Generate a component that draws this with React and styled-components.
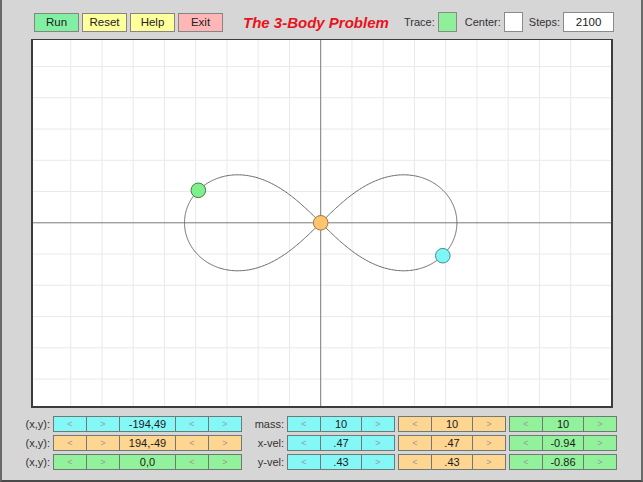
import React, { useMemo } from "react"
import styled, { createGlobalStyle } from "styled-components"

const GlobalStyle = createGlobalStyle`
  html, body {
    margin: 0;
    padding: 0;
    background: #d6d6d6;
  }
  body {
    font-family: "Liberation Sans", Arial, sans-serif;
  }
`

const Frame = styled.div`
  box-sizing: border-box;
  width: 643px;
  height: 482px;
  background: #d6d6d6;
  border-left: 2px solid #6a6a6a;
  border-right: 2px solid #6a6a6a;
  border-bottom: 2px solid #4a4a4a;
  overflow: hidden;
`

const TopBar = styled.div`
  display: flex;
  align-items: center;
  height: 20px;
  margin-top: 12px;
  margin-bottom: 7px;
  padding-left: 32px;
  font-size: 11px;
  color: #222;
`

const Button = styled.div`
  box-sizing: border-box;
  width: 45px;
  height: 19px;
  margin-right: 3px;
  display: flex;
  align-items: center;
  justify-content: center;
  background: ${p => p.$bg};
  border: 1px solid #858585;
  font-size: 11.5px;
  color: #222;
`

const Title = styled.div`
  margin-left: 17px;
  width: 146px;
  font-size: 15px;
  font-weight: bold;
  font-style: italic;
  color: #e8131c;
  white-space: nowrap;
`

const Label = styled.span`
  margin-left: ${p => p.$ml}px;
  margin-right: 3px;
  font-size: 11px;
  color: #333;
`

const Box = styled.div`
  box-sizing: border-box;
  width: ${p => p.$w}px;
  height: 20px;
  background: ${p => p.$bg};
  border: 1px solid #8a8a8a;
  display: flex;
  align-items: center;
  justify-content: center;
  font-size: 11.5px;
  color: #222;
`

const Canvas = styled.div`
  box-sizing: border-box;
  margin-left: 29px;
  width: 582px;
  height: 369px;
  background: #fff;
  border: 2px solid #3c3c3c;
  border-top-width: 1.5px;
  svg {
    display: block;
  }
`

const Panel = styled.div`
  display: grid;
  grid-template-columns: 48px 189px 39px 108px 108px 108px;
  grid-auto-rows: 16px;
  column-gap: 3px;
  row-gap: 3px;
  margin-top: 8px;
`

const RowLabel = styled.div`
  display: flex;
  align-items: center;
  justify-content: flex-end;
  font-size: 11px;
  color: #333;
  white-space: nowrap;
`

const Group = styled.div`
  display: flex;
  height: 16px;
`

const Cell = styled.div`
  box-sizing: border-box;
  width: ${p => p.$w}px;
  height: 16px;
  margin-left: -1px;
  &:first-child { margin-left: 0; }
  background: ${p => p.$bg};
  border: 1px solid #6f7a74;
  display: flex;
  align-items: center;
  justify-content: center;
  font-size: ${p => (p.$arrow ? 9 : 11)}px;
  color: ${p => (p.$arrow ? "#9a9a9a" : "#1a1a1a")};
`

const CYAN = "#84f7f7"
const ORANGE = "#ffd592"
const GREEN = "#91f29b"

// figure-eight orbit, equal masses, G = 1
function figureEight() {
  const p = [[0.97000436, -0.24308753], [-0.97000436, 0.24308753], [0, 0]]
  const v3 = [-0.93240737, -0.86473146]
  const v = [[-v3[0] / 2, -v3[1] / 2], [-v3[0] / 2, -v3[1] / 2], [v3[0], v3[1]]]
  const acc = () => {
    const a = [[0, 0], [0, 0], [0, 0]]
    for (let i = 0; i < 3; i++)
      for (let j = 0; j < 3; j++) {
        if (i === j) continue
        const dx = p[j][0] - p[i][0]
        const dy = p[j][1] - p[i][1]
        const r3 = Math.pow(dx * dx + dy * dy, 1.5)
        a[i][0] += dx / r3
        a[i][1] += dy / r3
      }
    return a
  }
  const N = 3000
  const dt = 6.32591398 / N
  const pts = [[p[0][0], p[0][1]]]
  let a = acc()
  for (let s = 0; s < N; s++) {
    for (let i = 0; i < 3; i++) {
      v[i][0] += a[i][0] * dt / 2
      v[i][1] += a[i][1] * dt / 2
      p[i][0] += v[i][0] * dt
      p[i][1] += v[i][1] * dt
    }
    a = acc()
    for (let i = 0; i < 3; i++) {
      v[i][0] += a[i][0] * dt / 2
      v[i][1] += a[i][1] * dt / 2
    }
    if (s % 5 === 4) pts.push([p[0][0], p[0][1]])
  }
  return pts
}

const CX = 320.7
const CY = 223.3
const SX = 126
const SY = 134
const STEP = 31.25

const Plot = () => {
  const path = useMemo(() => {
    const pts = figureEight()
    return pts
      .map(([x, y], i) => `${i ? "L" : "M"}${(CX + x * SX).toFixed(2)},${(CY - y * SY).toFixed(2)}`)
      .join(" ") + " Z"
  }, [])

  const vLines = []
  for (let k = -8; k <= 8; k++) if (k) vLines.push(CX + k * STEP)
  const hLines = []
  for (let k = -5; k <= 5; k++) if (k) hLines.push(CY + k * STEP)

  return (
    <svg width="578" height="365.5" viewBox="33 40.5 578 365.5">
      {vLines.map(x => (
        <line key={"v" + x} x1={x} y1="40" x2={x} y2="407" stroke="#e9e9e9" strokeWidth="1" />
      ))}
      {hLines.map(y => (
        <line key={"h" + y} x1="33" y1={y} x2="611" y2={y} stroke="#e9e9e9" strokeWidth="1" />
      ))}
      <line x1={CX} y1="40" x2={CX} y2="407" stroke="#7a7a7a" strokeWidth="1" />
      <line x1="33" y1={CY} x2="611" y2={CY} stroke="#7a7a7a" strokeWidth="1" />
      <path d={path} fill="none" stroke="#6a6a6a" strokeWidth="1" />
      <circle cx="198.3" cy="190.8" r="7.3" fill="#7ef08c" stroke="#3f7f47" strokeWidth="1" />
      <circle cx={CX} cy={CY} r="7.3" fill="#ffc46e" stroke="#a07440" strokeWidth="1" />
      <circle cx="442.8" cy="256.2" r="7.3" fill="#7ff6f6" stroke="#3e8f91" strokeWidth="1" />
    </svg>
  )
}

const PosGroup = ({ bg, value }) => (
  <Group>
    <Cell $w={34} $bg={bg} $arrow>&lt;</Cell>
    <Cell $w={34} $bg={bg} $arrow>&gt;</Cell>
    <Cell $w={57} $bg={bg}>{value}</Cell>
    <Cell $w={34} $bg={bg} $arrow>&lt;</Cell>
    <Cell $w={34} $bg={bg} $arrow>&gt;</Cell>
  </Group>
)

const ValGroup = ({ bg, value }) => (
  <Group>
    <Cell $w={34} $bg={bg} $arrow>&lt;</Cell>
    <Cell $w={42} $bg={bg}>{value}</Cell>
    <Cell $w={34} $bg={bg} $arrow>&gt;</Cell>
  </Group>
)

const rows = [
  { pos: "-194,49", posBg: CYAN, label: "mass:", vals: ["10", "10", "10"] },
  { pos: "194,-49", posBg: ORANGE, label: "x-vel:", vals: [".47", ".47", "-0.94"] },
  { pos: "0,0", posBg: GREEN, label: "y-vel:", vals: [".43", ".43", "-0.86"] },
]

const App = () => (
  <Frame>
    <GlobalStyle />
    <TopBar>
      <Button $bg="#82f0a2">Run</Button>
      <Button $bg="#ffff9c">Reset</Button>
      <Button $bg="#ffff9c">Help</Button>
      <Button $bg="#ffb6b6">Exit</Button>
      <Title>The 3-Body Problem</Title>
      <Label $ml={15}>Trace:</Label>
      <Box $w={19} $bg="#8ff09c" />
      <Label $ml={8}>Center:</Label>
      <Box $w={19} $bg="#fff" />
      <Label $ml={6}>Steps:</Label>
      <Box $w={51} $bg="#fff">2100</Box>
    </TopBar>
    <Canvas>
      <Plot />
    </Canvas>
    <Panel>
      {rows.map(r => (
        <React.Fragment key={r.label}>
          <RowLabel>(x,y):</RowLabel>
          <PosGroup bg={r.posBg} value={r.pos} />
          <RowLabel>{r.label}</RowLabel>
          <ValGroup bg={CYAN} value={r.vals[0]} />
          <ValGroup bg={ORANGE} value={r.vals[1]} />
          <ValGroup bg={GREEN} value={r.vals[2]} />
        </React.Fragment>
      ))}
    </Panel>
  </Frame>
)

export default App
